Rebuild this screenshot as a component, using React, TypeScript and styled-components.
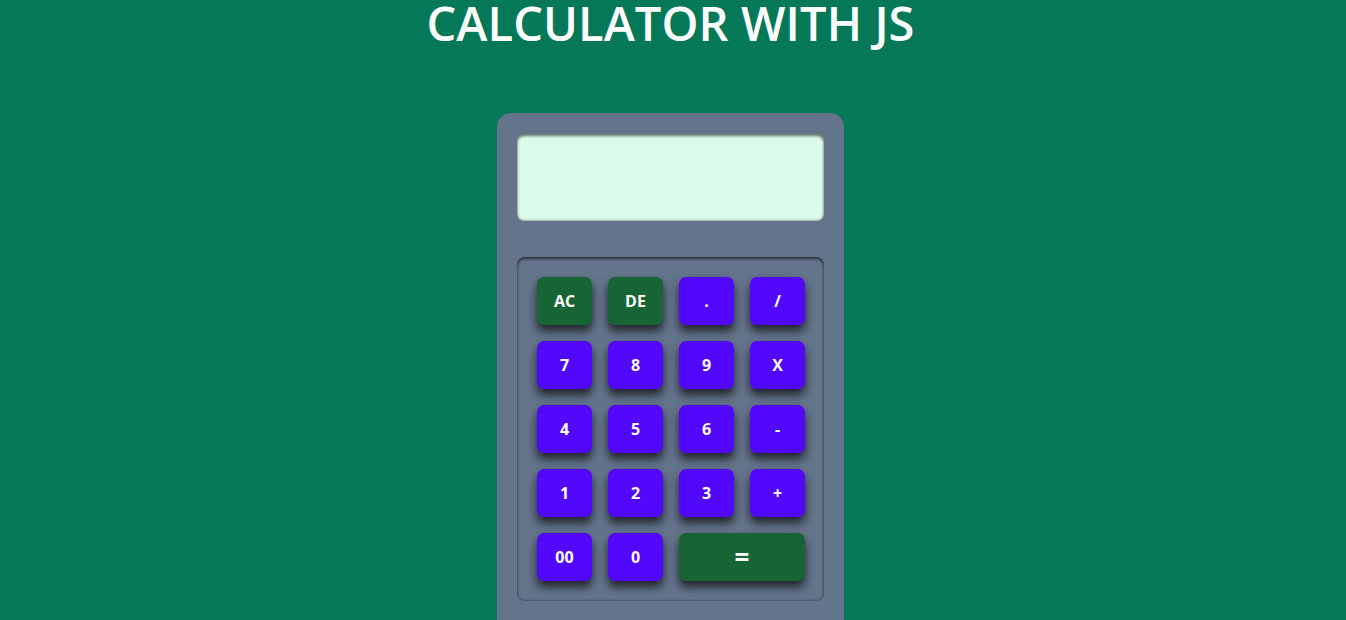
import React from "react";
import styled, { createGlobalStyle } from "styled-components";

const Global = createGlobalStyle`
  html, body { margin: 0; padding: 0; }
  body {
    background: #047857;
    font-family: "Open Sans", "Noto Sans", sans-serif;
    height: 620px;
    overflow: hidden;
  }
`;

const Page = styled.div`
  display: flex;
  flex-direction: column;
  align-items: center;
`;

const Title = styled.h1`
  margin: 0 5px 0 0;
  height: 113px;
  color: #ffffff;
  font-size: 47px;
  font-weight: 600;
  line-height: 46px;
  letter-spacing: 0.1px;
`;

const Body = styled.div`
  width: 347px;
  height: 520px;
  margin-right: 5px;
  box-sizing: border-box;
  background: #64748b;
  border-radius: 14px;
  padding: 21px 20px 20px 20px;
  display: flex;
  flex-direction: column;
  gap: 36px;
`;

const Screen = styled.div`
  height: 87px;
  background: #dcfae9;
  border-radius: 7px;
  box-shadow: inset 0 2px 3px rgba(0, 0, 0, 0.55), inset 0 -1px 2px rgba(0, 0, 0, 0.3);
`;

const Keypad = styled.div`
  border-radius: 8px;
  padding: 20px;
  display: grid;
  grid-template-columns: repeat(4, 55px);
  grid-auto-rows: 48px;
  column-gap: 16px;
  row-gap: 16px;
  box-shadow: inset 0 2px 3px rgba(0, 0, 0, 0.6), inset 0 -1px 2px rgba(0, 0, 0, 0.25);
`;

const Key = styled.button<{ $green?: boolean; $wide?: boolean; $big?: boolean }>`
  border: none;
  border-radius: 7px;
  background: ${(p) => (p.$green ? "#176535" : "#5208fb")};
  color: #ffffff;
  font-family: "Open Sans", "Noto Sans", sans-serif;
  font-weight: 700;
  font-size: ${(p) => (p.$big ? "26px" : "16px")};
  grid-column: ${(p) => (p.$wide ? "span 2" : "auto")};
  box-shadow: 0 6px 10px rgba(0, 0, 0, 0.7);
  padding: 0;
  cursor: pointer;
`;

const keys: { label: string; green?: boolean; wide?: boolean; big?: boolean }[] = [
  { label: "AC", green: true },
  { label: "DE", green: true },
  { label: "." },
  { label: "/" },
  { label: "7" },
  { label: "8" },
  { label: "9" },
  { label: "X" },
  { label: "4" },
  { label: "5" },
  { label: "6" },
  { label: "-" },
  { label: "1" },
  { label: "2" },
  { label: "3" },
  { label: "+" },
  { label: "00" },
  { label: "0" },
  { label: "=", green: true, wide: true, big: true },
];

export default function App() {
  return (
    <Page>
      <Global />
      <Title>CALCULATOR WITH JS</Title>
      <Body>
        <Screen />
        <Keypad>
          {keys.map((k) => (
            <Key key={k.label} $green={k.green} $wide={k.wide} $big={k.big}>
              {k.label}
            </Key>
          ))}
        </Keypad>
      </Body>
    </Page>
  );
}
